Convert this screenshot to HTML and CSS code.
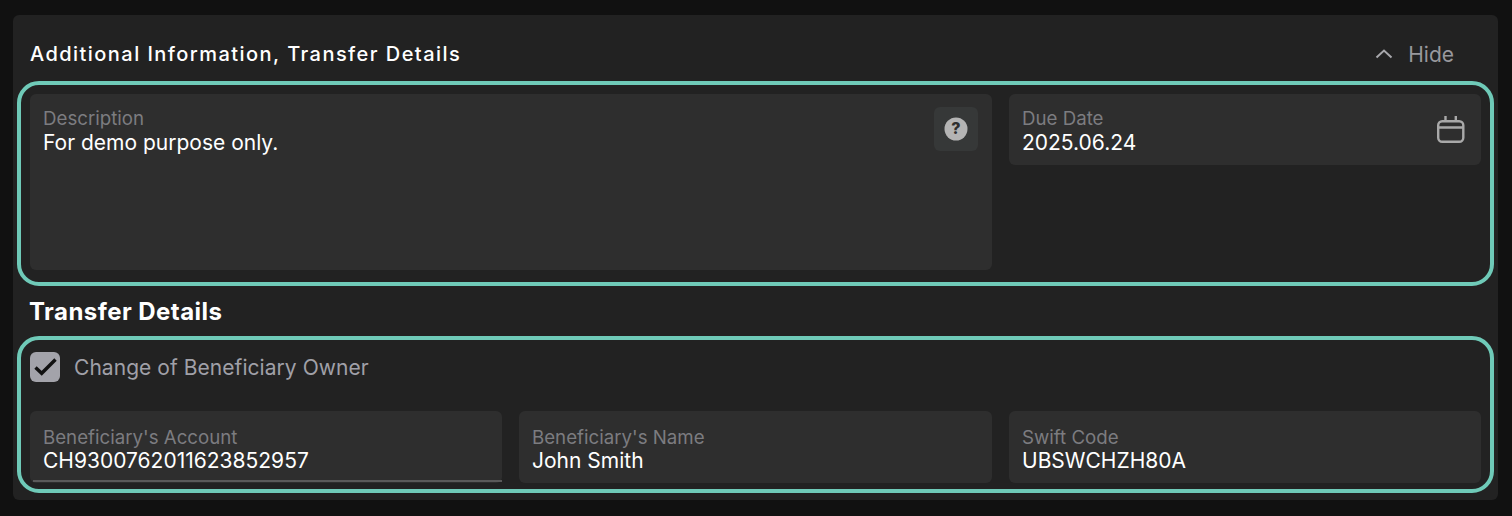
FILE: index.html
```html
<!DOCTYPE html>
<html lang="en">
<head>
<meta charset="utf-8">
<title>Transfer Details</title>
<link rel="stylesheet" href="styles.css">
</head>
<body>
<main class="card">
  <header class="head">
    <h2 class="head-title">Additional Information, Transfer Details</h2>
    <button class="hide" type="button">
      <svg class="chev" width="18" height="18" viewBox="0 0 18 18" fill="none"><path d="M1.500 12.500 9 5.500l7.500 7" stroke="#a8a8ac" stroke-width="2"/></svg>
      <span>Hide</span>
    </button>
  </header>
  <section class="box box-a">
    <div class="field field-desc">
      <div class="label">Description</div>
      <div class="value">For demo purpose only.</div>
      <span class="help"><svg width="24" height="24" viewBox="0 0 24 24"><circle cx="12" cy="12" r="11.500" fill="#b4b4b4"/><text x="12" y="17" class="qmark" text-anchor="middle">?</text></svg></span>
    </div>
    <div class="field field-date">
      <div>
        <div class="label">Due Date</div>
        <div class="value">2025.06.24</div>
      </div>
      <svg class="cal" width="30" height="30" viewBox="0 0 30 30" fill="none" stroke="#a9a9a9" stroke-width="2.400"><rect x="2.200" y="6.200" width="25.100" height="20.600" rx="4"/><path d="M2.200 12.500h25.100M9.500 1v6M19.800 1v6"/></svg>
    </div>
  </section>
  <h3 class="sub-title">Transfer Details</h3>
  <section class="box box-b">
    <div class="check-row">
      <span class="check"><svg width="30" height="30" viewBox="0 0 30 30" fill="none"><path d="M5.500 15.500 11.700 21.300 25.500 7.500" stroke="#111" stroke-width="3.400"/></svg></span>
      <span class="check-label">Change of Beneficiary Owner</span>
    </div>
    <div class="fields">
      <div class="field field-line">
        <div class="label">Beneficiary's Account</div>
        <div class="value">CH9300762011623852957</div>
      </div>
      <div class="field">
        <div class="label">Beneficiary's Name</div>
        <div class="value">John Smith</div>
      </div>
      <div class="field">
        <div class="label">Swift Code</div>
        <div class="value">UBSWCHZH80A</div>
      </div>
    </div>
  </section>
</main>
</body>
</html>
```
FILE: styles.css
```css
* { box-sizing: border-box; }
html, body { margin: 0; height: 516px; overflow: hidden; }
body {
  background: #111111;
  padding: 15px 14px 0 13px;
  font-family: Inter, "Liberation Sans", sans-serif;
  color: #fff;
}
.card {
  background: #222222;
  border-radius: 6px;
  height: 485px;
  padding: 0 4px;
}
.head {
  height: 66px;
  display: flex;
  align-items: center;
  justify-content: space-between;
  padding: 12px 40px 0 13px;
}
.head-title {
  margin: 0;
  font-size: 20px;
  font-weight: 500;
  letter-spacing: 1.45px;
}
.hide {
  display: flex;
  align-items: center;
  gap: 15px;
  background: none;
  border: 0;
  padding: 0;
  color: #98989d;
  font: 400 21px Inter, "Liberation Sans", sans-serif;
}
.chev { display: block; }
.box {
  border: 4px solid #6fcab8;
  border-radius: 22px;
}
.box-a {
  height: 205px;
  padding: 9px 8px 12px 9px;
  display: grid;
  grid-template-columns: 962px 472px;
  column-gap: 17px;
  align-items: start;
}
.field {
  background: #2e2e2e;
  border-radius: 6px;
  height: 72px;
  padding: 15px 13px 0;
  position: relative;
}
.field-desc { height: 176px; }
.field-date {
  height: 71px;
  display: flex;
  justify-content: space-between;
}
.fields .field { padding-top: 17px; }
.label {
  font-size: 18.7px;
  line-height: 20px;
  color: #7c7c80;
}
.value {
  font-size: 21px;
  line-height: 27px;
  color: #fff;
}
.fields .value { line-height: 25px; }
.help {
  position: absolute;
  top: 13px;
  right: 14px;
  width: 44px;
  height: 44px;
  border-radius: 6px;
  background: #363838;
  display: flex;
  align-items: center;
  justify-content: center;
}
.qmark {
  font: 800 16px Inter, "Liberation Sans", sans-serif;
  fill: #2e2e2e;
}
.cal { margin: 6px 2px 0 0; }
.sub-title {
  margin: 0;
  height: 50px;
  padding: 1px 0 0 12px;
  display: flex;
  align-items: center;
  font-size: 24px;
  font-weight: 700;
  letter-spacing: 0.45px;
}
.box-b {
  height: 157px;
  padding: 12px 8px 6px 9px;
}
.check-row {
  display: flex;
  align-items: center;
  gap: 14px;
  height: 30px;
}
.check {
  width: 30px;
  height: 30px;
  border-radius: 6px;
  background: #a3a3aa;
}
.check svg { display: block; }
.check-label {
  font-size: 21px;
  color: #a0a0a8;
  letter-spacing: 0.05px;
}
.fields {
  margin-top: 29px;
  display: grid;
  grid-template-columns: 472px 473px 472px;
  column-gap: 17px;
}
.field-line::after {
  content: "";
  position: absolute;
  left: 3px;
  right: 0;
  bottom: 1px;
  height: 2px;
  background: #5a5a5a;
}
```
